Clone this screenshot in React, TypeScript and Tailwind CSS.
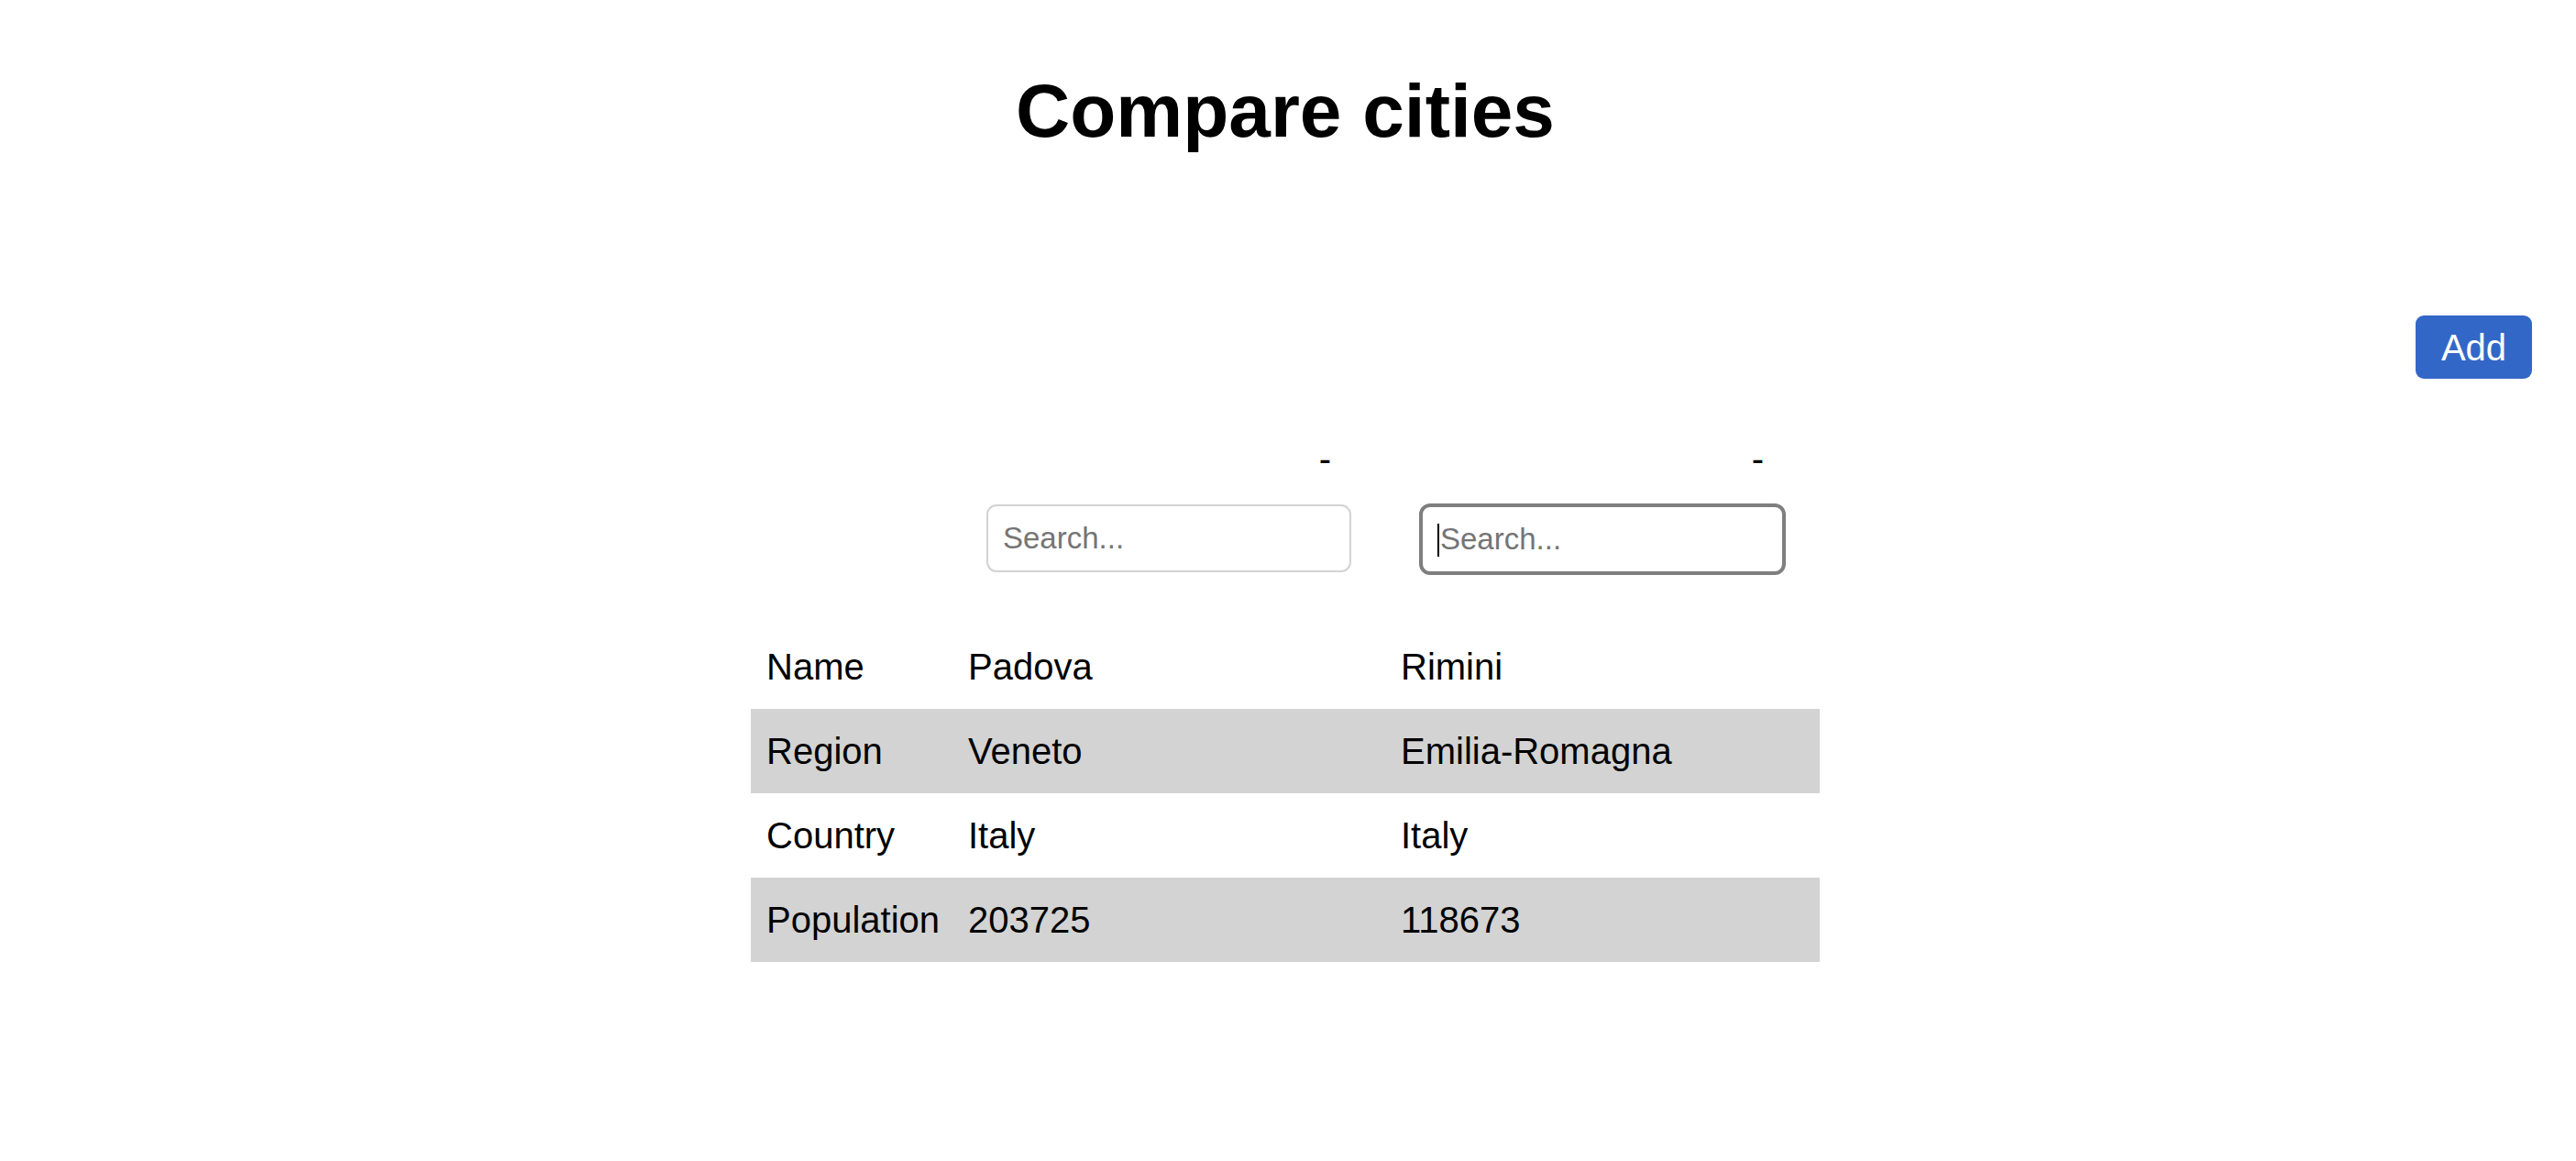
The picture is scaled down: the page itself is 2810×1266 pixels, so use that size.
import React from "react";

const rows = [
  { label: "Name", a: "Padova", b: "Rimini" },
  { label: "Region", a: "Veneto", b: "Emilia-Romagna" },
  { label: "Country", a: "Italy", b: "Italy" },
  { label: "Population", a: "203725", b: "118673" },
];

export default function App() {
  return (
    <div className="w-[2804px] bg-white text-black font-['Liberation_Sans',Arial,sans-serif]">
      <h1 className="pt-[75px] text-center text-[82px] leading-[92px] font-bold">Compare cities</h1>

      <div className="mt-[177px] flex justify-end pr-[42px]">
        <button className="h-[69px] w-[127px] rounded-[9px] bg-[#3367c7] text-[40px] leading-[46px] text-white">
          Add
        </button>
      </div>

      <div className="mx-auto w-[1166px]">
        <div className="mt-[64px] grid grid-cols-[220px_472px_474px] text-[40px] leading-[46px]">
          <div />
          <div className="flex justify-end pr-[59px]">
            <span>-</span>
          </div>
          <div className="flex justify-end pr-[61px]">
            <span>-</span>
          </div>
        </div>

        <div className="mt-[27px] grid h-[74px] grid-cols-[220px_472px_474px] items-start">
          <div />
          <div className="flex justify-center">
            <input
              placeholder="Search..."
              className="h-[74px] w-[398px] rounded-[11px] border-2 border-[#d3d3d3] bg-white pl-[16px] text-[33px] outline-none placeholder:text-[#757575]"
            />
          </div>
          <div className="flex justify-center">
            <div className="relative -mt-[1px]">
              <input
                placeholder="Search..."
                className="h-[78px] w-[400px] rounded-[12px] border-4 border-[#7f7f7f] bg-white pl-[19px] text-[33px] outline-none placeholder:text-[#757575]"
              />
              <span className="absolute left-[20px] top-[22px] h-[36px] w-[2px] bg-black" />
            </div>
          </div>
        </div>

        <div className="mt-[57px] pb-[217px] text-[40px] leading-[46px]">
          {rows.map((r, i) => (
            <div
              key={r.label}
              className={`grid h-[92px] grid-cols-[220px_472px_474px] items-center ${i % 2 === 1 ? "bg-[#d3d3d3]" : "bg-white"}`}
            >
              <div className="px-[17px] whitespace-nowrap">{r.label}</div>
              <div className="px-[17px] whitespace-nowrap">{r.a}</div>
              <div className="px-[17px] whitespace-nowrap">{r.b}</div>
            </div>
          ))}
        </div>
      </div>
    </div>
  );
}
